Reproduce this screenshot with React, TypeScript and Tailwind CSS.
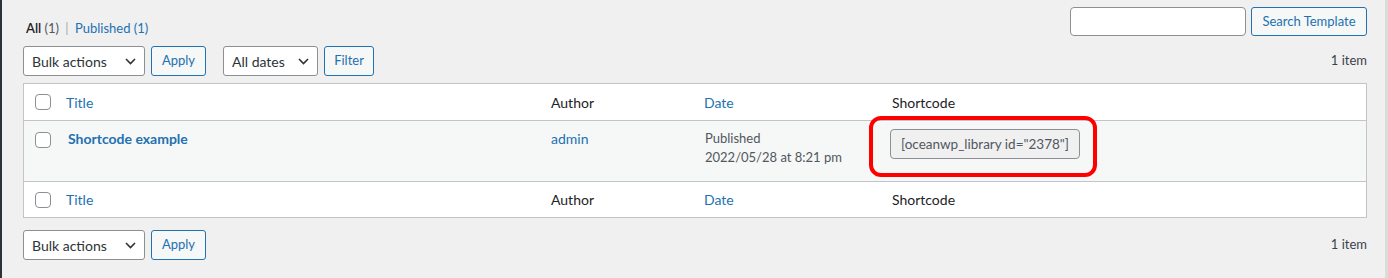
const FONT = "font-['Lato',sans-serif]";

function Chevron() {
  return (
    <svg width="11" height="7" viewBox="0 0 11 7" fill="none" className="text-[#2c3338]">
      <path d="M1 1l4.5 4.5L10 1" stroke="currentColor" strokeWidth="1.6" />
    </svg>
  );
}

function Select({ label, width }: { label: string; width: string }) {
  return (
    <div
      className={`flex h-[30px] items-center justify-between rounded-[3px] border border-[#8c8f94] bg-white pl-[8px] pr-[8px] text-[14px] text-[#2c3338] ${width}`}
    >
      <span>{label}</span>
      <Chevron />
    </div>
  );
}

function Button({ label, width }: { label: string; width: string }) {
  return (
    <div
      className={`flex h-[30px] items-center justify-center rounded-[3px] border border-[#2271b1] bg-[#f6f7f7] text-[13px] text-[#2271b1] ${width}`}
    >
      {label}
    </div>
  );
}

function Checkbox() {
  return <div className="h-[16px] w-[16px] rounded-[4px] border border-[#8c8f94] bg-white" />;
}

function HeadRow({ footer }: { footer?: boolean }) {
  return (
    <div
      className={`grid grid-cols-[34px_485px_153px_188px_1fr] items-center text-[14px] ${
        footer ? "h-[35px]" : "h-[37px] border-b border-[#c3c4c7]"
      }`}
    >
      <div className="pl-[11px]">
        <Checkbox />
      </div>
      <div className="pl-[8px] text-[#2271b1]">Title</div>
      <div className="pl-[8px] text-[#1d2327]">Author</div>
      <div className="pl-[8px] text-[#2271b1]">Date</div>
      <div className="pl-[8px] text-[#1d2327]">Shortcode</div>
    </div>
  );
}

export default function App() {
  return (
    <div className={`flex h-[278px] w-full bg-[#f0f0f1] ${FONT}`}>
      <div className="w-[2px] bg-[#2c3338]" />

      <div className="flex-1 pl-[21px] pr-[18px]">
        {/* views + search */}
        <div className="flex items-start justify-between pt-[7px]">
          <div className="pl-[3px] pt-[11px] text-[13px] leading-[20px]">
            <span className="font-semibold text-[#1d2327]">All</span>{" "}
            <span className="text-[#50575e]">(1)</span>{" "}
            <span className="px-[3px] text-[#a7aaad]">|</span>{" "}
            <span className="text-[#2271b1]">Published</span>{" "}
            <span className="text-[#2271b1]">(1)</span>
          </div>
          <div className="flex gap-[5px]">
            <div className="h-[29px] w-[176px] rounded-[4px] border border-[#8c8f94] bg-white" />
            <div className="flex h-[29px] w-[116px] items-center justify-center rounded-[3px] border border-[#2271b1] bg-[#f6f7f7] text-[13px] text-[#2271b1]">
              Search Template
            </div>
          </div>
        </div>

        {/* top tablenav */}
        <div className="mt-[8px] flex items-center justify-between">
          <div className="flex items-center">
            <Select label="Bulk actions" width="w-[122px]" />
            <div className="ml-[6px]">
              <Button label="Apply" width="w-[55px]" />
            </div>
            <div className="ml-[17px]">
              <Select label="All dates" width="w-[95px]" />
            </div>
            <div className="ml-[6px]">
              <Button label="Filter" width="w-[50px]" />
            </div>
          </div>
          <div className="text-[13px] text-[#3c434a]">1 item</div>
        </div>

        {/* table */}
        <div className="mt-[7px] border border-[#c3c4c7] bg-white">
          <HeadRow />
          <div className="grid h-[61px] grid-cols-[34px_485px_153px_188px_1fr] border-b border-[#c3c4c7] bg-[#f6f7f7] text-[14px]">
            <div className="pl-[11px] pt-[11px]">
              <Checkbox />
            </div>
            <div className="pl-[10px] pt-[8px] font-bold leading-[20px] text-[#2271b1]">
              Shortcode example
            </div>
            <div className="pl-[8px] pt-[8px] leading-[20px] text-[#2271b1]">admin</div>
            <div className="pl-[9px] pt-[8px] text-[13px] leading-[19px] text-[#50575e]">
              <div>Published</div>
              <div>2022/05/28 at 8:21 pm</div>
            </div>
            <div className="pl-[6px] pt-[8px]">
              <div className="relative inline-block">
                <div className="flex h-[30px] w-[190px] items-center whitespace-nowrap rounded-[4px] border border-[#8c8f94] bg-[#f0f0f1] pl-[10px] text-[13.5px] text-[#50575e]">
                  [oceanwp_library id="2378"]
                </div>
                <div className="pointer-events-none absolute left-[-21px] top-[-13px] h-[61px] w-[228px] rounded-[12px] border-[4px] border-[#ff0000]" />
              </div>
            </div>
          </div>
          <HeadRow footer />
        </div>

        {/* bottom tablenav */}
        <div className="mt-[12px] flex items-center justify-between">
          <div className="flex items-center">
            <Select label="Bulk actions" width="w-[122px]" />
            <div className="ml-[6px]">
              <Button label="Apply" width="w-[55px]" />
            </div>
          </div>
          <div className="text-[13px] text-[#3c434a]">1 item</div>
        </div>
      </div>

      <div className="w-[3px] bg-[#dcdcde]" />
    </div>
  );
}
